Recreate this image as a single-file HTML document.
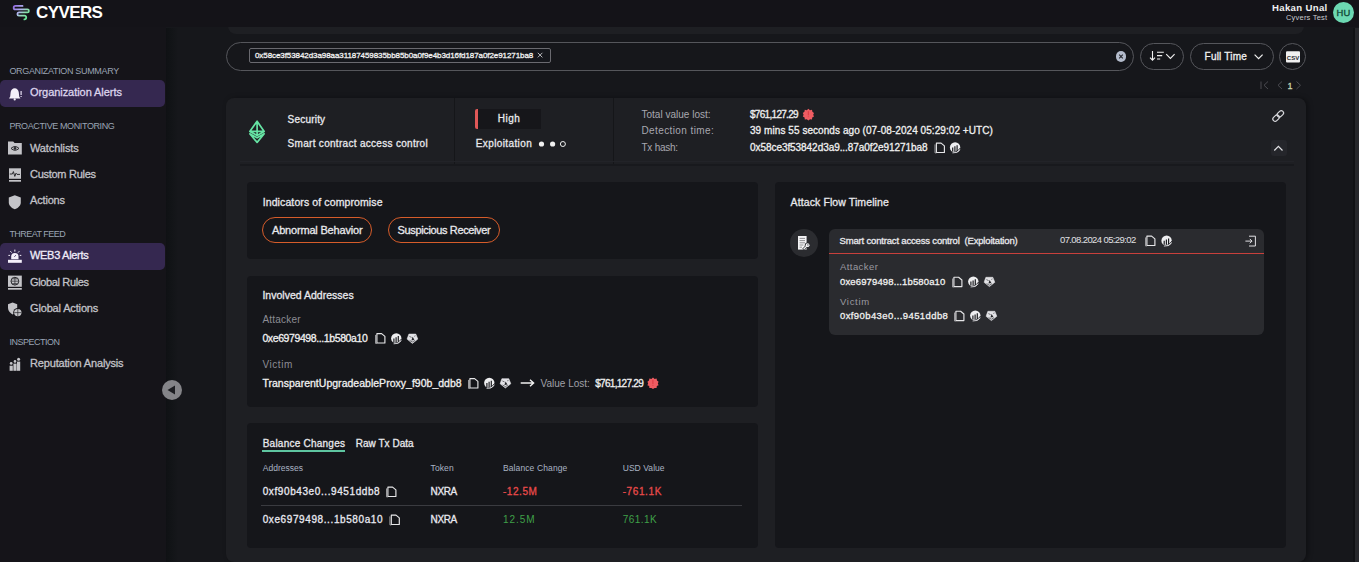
<!DOCTYPE html>
<html><head><meta charset="utf-8">
<style>
*{box-sizing:border-box;margin:0;padding:0}
html,body{width:1359px;height:562px;overflow:hidden;background:#16171b;font-family:"Liberation Sans",sans-serif}
.a{position:absolute}
.t{position:absolute;line-height:1;white-space:pre;font-family:"Liberation Sans",sans-serif}
svg{position:absolute;overflow:visible}
</style></head><body>
<!-- sidebar -->
<div class="a" style="left:0;top:0;width:166px;height:562px;background:#151419"></div>
<div class="a" style="left:166px;top:28px;width:12px;height:534px;background:linear-gradient(90deg,#0f1114 0%,#121417 45%,#16171b 100%)"></div>
<!-- top peek card -->
<div class="a" style="left:228px;top:0;width:1076px;height:33.5px;background:#1e1f23;border-radius:0 0 8px 8px"></div>
<!-- header -->
<div class="a" style="left:0;top:0;width:1359px;height:27px;background:#141318"></div>
<!-- scrollbar -->
<div class="a" style="left:1352.5px;top:28px;width:2px;height:534px;background:#111215"></div><div class="a" style="left:1354.5px;top:28px;width:4.5px;height:534px;background:#27282c"></div>
<!-- active nav -->
<div class="a" style="left:0;top:80px;width:165px;height:26.5px;background:#352850;border-radius:5px"></div>
<div class="a" style="left:0;top:243px;width:165px;height:27px;background:#352850;border-radius:5px"></div>
<!-- avatar -->
<div class="a" style="left:1333px;top:2px;width:21px;height:21px;border-radius:50%;background:#6cd8b2"></div>
<!-- search -->
<div class="a" style="left:226px;top:42px;width:908px;height:29px;border:1px solid #55565b;border-radius:15px"></div>
<div class="a" style="left:249px;top:48px;width:302px;height:15px;border:1px solid #6a6a70;border-radius:2px;background:#15171c"></div>
<div class="a" style="left:1115.8px;top:51.3px;width:10.4px;height:10.4px;border-radius:50%;background:#b4bccc"></div>
<div class="a" style="left:1140px;top:43px;width:44px;height:27px;border:1px solid #55565b;border-radius:14px"></div>
<div class="a" style="left:1190px;top:43px;width:84px;height:27px;border:1px solid #55565b;border-radius:14px"></div>
<div class="a" style="left:1279px;top:43px;width:27px;height:27px;border:1px solid #55565b;border-radius:50%"></div>
<!-- main card -->
<div class="a" style="left:225.5px;top:98px;width:1080.5px;height:464px;background:#1e1f23;border-radius:8px;box-shadow:2px 0 5px rgba(0,0,0,0.35)"></div>
<div class="a" style="left:454px;top:98px;width:1px;height:66px;background:#151619"></div>
<div class="a" style="left:613px;top:98px;width:1px;height:66px;background:#151619"></div>
<div class="a" style="left:240px;top:161px;width:1054px;height:1px;background:#222328"></div><div class="a" style="left:240px;top:164px;width:1054px;height:1.5px;background:#18191d"></div>
<!-- high badge -->
<div class="a" style="left:478px;top:109px;width:63px;height:20px;background:#16161a"></div>
<div class="a" style="left:474.5px;top:109px;width:3.5px;height:20px;background:#e05858;border-radius:2px 0 0 2px"></div>
<!-- chevron btn -->
<div class="a" style="left:1270.5px;top:140px;width:16px;height:16px;background:#25262b;border-radius:3px"></div>
<!-- inner panels -->
<div class="a" style="left:247px;top:182px;width:511px;height:76.5px;background:#15161a;border-radius:4px"></div>
<div class="a" style="left:247px;top:275.5px;width:511px;height:131px;background:#15161a;border-radius:4px"></div>
<div class="a" style="left:247px;top:423px;width:511px;height:125px;background:#15161a;border-radius:4px"></div>
<div class="a" style="left:774.5px;top:182px;width:511.5px;height:366px;background:#15161a;border-radius:4px"></div>
<!-- pills -->
<div class="a" style="left:262px;top:217px;width:110px;height:26px;border:1.5px solid #d65c2a;border-radius:13px"></div>
<div class="a" style="left:388px;top:217px;width:112px;height:26px;border:1.5px solid #d65c2a;border-radius:13px"></div>
<!-- tabs -->
<div class="a" style="left:262px;top:450.3px;width:83px;height:1.7px;background:#5ec5a0"></div>
<div class="a" style="left:261px;top:505px;width:481px;height:1px;background:#3a3b40"></div>
<!-- timeline -->
<div class="a" style="left:790px;top:229px;width:28px;height:28px;border-radius:50%;background:#2b2c30"></div>
<div class="a" style="left:829px;top:229px;width:434.5px;height:105.5px;background:#2a2b2f;border-radius:6px"></div>
<div class="a" style="left:829px;top:252.5px;width:434.5px;height:1.6px;background:#c8403c"></div>
<!-- collapse -->
<div class="a" style="left:162px;top:380px;width:20px;height:20px;border-radius:50%;background:#848488"></div>

<svg width="1359" height="562" viewBox="0 0 1359 562" style="left:0;top:0">
<defs>
<linearGradient id="lg" gradientUnits="userSpaceOnUse" x1="13" y1="5" x2="28" y2="18"><stop offset="0" stop-color="#9060e0"/><stop offset="0.45" stop-color="#b0b4f0"/><stop offset="0.7" stop-color="#90e0b0"/><stop offset="1" stop-color="#5ee890"/></linearGradient>
<g id="cp"><path d="M1.9 0.6H6.6L9.9 3.4V10H1.9Z" fill="none" stroke="#e6e6e8" stroke-width="1.15" stroke-linejoin="round"/><path d="M0.5 1.9V10.4H1.9" fill="none" stroke="#a8a8ac" stroke-width="0.9"/></g>
<g id="es"><circle cx="5.3" cy="5.2" r="5.2" fill="#eeeef0"/><path d="M2.9 9.2V5.2M5.1 9.2V4M7.3 8.6V2.9" stroke="#1c1d21" stroke-width="1.2"/><path d="M1.2 9.6Q6.4 11.4 10.6 5.6" stroke="#1c1d21" stroke-width="0.9" fill="none"/><path d="M2.6 10.6Q7.4 11.2 10.4 7.4" stroke="#d8d8dc" stroke-width="0.9" fill="none"/></g>
<g id="fx"><path d="M1.9 0.9H8.8L10.8 5.9L5.4 10.2L0.1 5.9Z" fill="#e2e2e6" stroke="#e2e2e6" stroke-width="0.6" stroke-linejoin="round"/><path d="M5.6 3.6L7.4 6.6L4.4 7.2Z" fill="#222327"/><path d="M2.4 3.2L4.6 4.2M8.2 2.2L7.6 3.4M2.6 7.2L5.4 8.8L8 7.2" stroke="#222327" stroke-width="0.6" fill="none"/></g>
</defs>
<!-- logo -->
<path d="M22.5 5.9H15.4C13.1 5.9 13.1 9.4 15.4 9.4H27.4C29.4 9.4 29.4 12.4 27.4 12.4H18.9C16.9 12.4 16.9 15.6 18.9 15.6H24.6C26.8 15.6 26.8 19.4 24.4 19.4" fill="none" stroke="url(#lg)" stroke-width="1.8" stroke-linecap="round" stroke-linejoin="round"/>
<!-- bell -->
<path d="M14.7 88.2C16.8 88.2 18.6 89.8 18.8 92.6L19.2 96.6L20.4 98.6H9.0L10.2 96.6L10.6 92.6C10.8 89.8 12.6 88.2 14.7 88.2Z" fill="#f4f0fa"/>
<circle cx="14.7" cy="99.4" r="1.1" fill="#f4f0fa"/>
<rect x="20.5" y="91" width="1.2" height="4" fill="#e8e0f4"/><rect x="20.5" y="96" width="1.2" height="1" fill="#e8e0f4"/>
<!-- watchlists folder -->
<path d="M8 141.4H13.2L14.6 143H21.8V154.4H8Z" fill="#c4c4c8"/>
<path d="M11 148.4Q15 144.6 19 148.4Q15 152.2 11 148.4Z" fill="none" stroke="#2a2a2e" stroke-width="1"/>
<circle cx="15" cy="148.4" r="1.3" fill="#2a2a2e"/>
<!-- custom rules -->
<rect x="9" y="168.3" width="12" height="10.5" fill="#c4c4c8"/>
<rect x="9" y="180" width="12" height="1.7" fill="#c4c4c8"/>
<path d="M9.8 174H12.4L13.4 171.6L14.8 176.4L16 173.2L17 174.4H20" fill="none" stroke="#2a2a2e" stroke-width="1"/>
<!-- actions shield -->
<path d="M14.8 195.2L20.8 197.4V202.4C20.8 205.6 18 207.8 14.8 209.3C11.6 207.8 8.8 205.6 8.8 202.4V197.4Z" fill="#c4c4c8"/>
<!-- web3 alarm -->
<path d="M11.2 259.2V256.6A3.65 3.65 0 0 1 18.5 256.6V259.2Z" fill="#f4f0fa"/>
<path d="M14.4 256.8L15.8 255.2" stroke="#352850" stroke-width="0.9"/>
<rect x="8" y="259.8" width="13.8" height="3" fill="#f4f0fa"/>
<path d="M14.85 249.6V251.6M10.4 251.2L11.6 252.6M19.3 251.2L18.1 252.6M8.4 255.4H10M19.7 255.4H21.3" stroke="#f4f0fa" stroke-width="1"/>
<!-- global rules -->
<rect x="8" y="275.6" width="13.8" height="11.2" fill="#c4c4c8"/>
<rect x="8" y="288" width="13.8" height="1.7" fill="#c4c4c8"/>
<circle cx="14.9" cy="281.2" r="3.9" fill="none" stroke="#2a2a2e" stroke-width="1"/>
<path d="M11 281.2H18.8M14.9 277.3V285.1M12.2 278.8H17.6M12.2 283.6H17.6" stroke="#2a2a2e" stroke-width="0.7"/>
<!-- global actions -->
<path d="M12.6 302.6L17.2 304.3V308C17.2 311 15 313 12.6 314.4C10.2 313 8 311 8 308V304.3Z" fill="#c4c4c8"/>
<circle cx="17.8" cy="312.6" r="4.6" fill="#151419"/>
<circle cx="17.8" cy="312.6" r="3.7" fill="#c4c4c8"/>
<path d="M14.2 312.6H21.4M17.8 309V316.2" stroke="#2a2a2e" stroke-width="0.7"/>
<!-- reputation -->
<rect x="9.6" y="365.7" width="3.2" height="5.1" fill="#c4c4c8"/>
<rect x="13.4" y="363.6" width="3.2" height="7.2" fill="#c4c4c8"/>
<rect x="17" y="361.6" width="3.2" height="9.2" fill="#c4c4c8"/>
<circle cx="11.2" cy="363.4" r="1.4" fill="#c4c4c8"/><circle cx="15" cy="361.4" r="1.3" fill="#c4c4c8"/><circle cx="18.6" cy="359.2" r="1.5" fill="#c4c4c8"/>
<!-- collapse triangle -->
<path d="M167.5 390L175 385.5V394.5Z" fill="#1c1d21"/>
<!-- avatar text -->
<text x="1343.6" y="15.7" font-family="Liberation Sans" font-size="9.4" letter-spacing="0.4" fill="#124a38" stroke="#124a38" stroke-width="0.35" text-anchor="middle">HU</text>
<!-- chip x -->
<path d="M537.8 52.8L542.4 57.4M542.4 52.8L537.8 57.4" stroke="#c8c8cc" stroke-width="0.9"/>
<!-- clear x -->
<path d="M1119.2 54.7L1122.8 58.3M1122.8 54.7L1119.2 58.3" stroke="#24262c" stroke-width="1.1"/>
<!-- sort icon -->
<path d="M1152.5 51V60M1150 57.6L1152.5 60.2L1155 57.6" fill="none" stroke="#f0f0f0" stroke-width="1.1"/>
<path d="M1157 52.2H1163.8M1157 55.6H1162.2M1157 59H1160.2" stroke="#f0f0f0" stroke-width="1.1"/>
<path d="M1166.2 54.2L1170.4 58.4L1174.6 54.2" fill="none" stroke="#f0f0f0" stroke-width="1.1"/>
<!-- full time chevron -->
<path d="M1254.6 54.6L1258.6 58.6L1262.6 54.6" fill="none" stroke="#f0f0f0" stroke-width="1.2"/>
<!-- csv -->
<rect x="1286" y="51.3" width="14" height="11.3" rx="1" fill="#f0f0f0"/>
<text x="1293" y="60" font-family="Liberation Sans" font-weight="700" font-size="6" fill="#2a2a2e" text-anchor="middle">CSV</text>
<!-- pagination -->
<path d="M1261 81.5V89M1268 81.5L1264 85.25L1268 89" fill="none" stroke="#4a4a50" stroke-width="1"/>
<path d="M1282 81.5L1278 85.25L1282 89" fill="none" stroke="#4a4a50" stroke-width="1"/>
<path d="M1296.5 81.5L1300.5 85.25L1296.5 89" fill="none" stroke="#4a4a50" stroke-width="1"/>
<!-- eth -->
<path d="M257.1 121.2L249.8 131.4L257.1 135.4L264.2 131.4Z M257.1 121.2V135.4 M249.8 131.4H264.2" fill="none" stroke="#66e4a4" stroke-width="1.7" stroke-linejoin="round"/>
<path d="M249.8 133.8L257.1 142.4L264.2 133.8L257.1 137.8Z" fill="none" stroke="#66e4a4" stroke-width="1.7" stroke-linejoin="round"/>
<!-- dots -->
<circle cx="541.5" cy="144" r="2.6" fill="#f0f0f0"/><circle cx="552.6" cy="144" r="2.6" fill="#f0f0f0"/><circle cx="562.9" cy="144" r="2.5" fill="none" stroke="#f0f0f0" stroke-width="1"/>
<!-- red badges -->
<g id="rb"><path d="M808.4 108.8L810 110.2L812 109.8L812.4 111.8L814 113L813.2 114.8L814 116.6L812.2 117.4L812 119.4L810 119.2L808.4 120.4L806.8 119.2L804.8 119.4L804.6 117.4L802.8 116.6L803.6 114.8L802.8 113L804.4 111.8L804.8 109.8L806.8 110.2Z" fill="#ef5c62"/><path d="M808.3 111.2V115.4M808.3 116.4V117.2" stroke="#d83440" stroke-width="0.9"/></g>
<use href="#rb" transform="translate(-155.4 268.7)"/>
<!-- link -->
<g transform="translate(1278.2 116) rotate(-45)" fill="none" stroke="#d8d8dc" stroke-width="1.2"><rect x="-6.6" y="-2.3" width="7.2" height="4.6" rx="2.3"/><rect x="-0.6" y="-2.3" width="7.2" height="4.6" rx="2.3"/></g>
<!-- chevron up -->
<path d="M1274.3 150.5L1278.4 146.3L1282.5 150.5" fill="none" stroke="#e0e0e4" stroke-width="1.2"/>
<!-- header icons -->
<use href="#cp" x="934.5" y="142.5"/>
<use href="#es" x="949.8" y="142.3"/>
<!-- involved -->
<use href="#cp" x="375" y="333"/><use href="#es" x="391" y="333.2"/><use href="#fx" x="407" y="333.2"/>
<use href="#cp" x="468" y="378"/><use href="#es" x="484" y="377.8"/><use href="#fx" x="500" y="377.8"/>
<path d="M520.7 383H533.4M530 379.8L533.6 383L530 386.2" fill="none" stroke="#f0f0f0" stroke-width="1.4"/>
<!-- table copies -->
<use href="#cp" x="386" y="486.5"/><use href="#cp" x="389.4" y="514.5"/>
<!-- timeline -->
<path d="M798 236H806.6V249.6H798Z" fill="#f4f4f6"/>
<path d="M799.6 238.4H805M799.6 240.6H805M799.6 242.8H805M799.6 245H803.4M799.6 247.2H802" stroke="#3a3b40" stroke-width="0.55"/>
<path d="M807.6 245.2L803.2 249.6" stroke="#2b2c30" stroke-width="2.6"/>
<circle cx="807.6" cy="245.2" r="2.8" fill="#2b2c30"/>
<path d="M807.4 245.4L803.6 249.2" stroke="#f4f4f6" stroke-width="1.3"/>
<circle cx="807.6" cy="245.2" r="1.9" fill="#f4f4f6"/><circle cx="807.9" cy="244.9" r="0.6" fill="#2b2c30"/>
<use href="#cp" x="1145" y="235.5"/><use href="#es" x="1161.3" y="235.5"/>
<path d="M1249 236.2H1255.4V246H1249M1245.4 241.1H1252M1249.8 238.9L1252 241.1L1249.8 243.3" fill="none" stroke="#e0e0e4" stroke-width="1"/>
<use href="#cp" x="952" y="276.6"/><use href="#es" x="968" y="276.4"/><use href="#fx" x="984" y="276.4"/>
<use href="#cp" x="954" y="310.6"/><use href="#es" x="970" y="310.4"/><use href="#fx" x="986" y="310.4"/>
</svg>

<div class="t" style="left:36.0px;top:4.00px;font-size:17px;font-weight:700;color:#ffffff;letter-spacing:-0.600px">CYVERS</div>
<div class="t" style="left:1272.0px;top:3.00px;font-size:9.6px;font-weight:700;color:#f0f0f0;letter-spacing:0.333px">Hakan Unal</div>
<div class="t" style="left:1286.0px;top:14.00px;font-size:7.5px;font-weight:400;color:#c8c8cc;letter-spacing:0.200px">Cyvers Test</div>
<div class="t" style="left:9.4px;top:67.00px;font-size:9px;font-weight:400;color:#9aa4b4;letter-spacing:-0.337px">ORGANIZATION SUMMARY</div>
<div class="t" style="left:30.0px;top:87.00px;font-size:11px;font-weight:400;color:#dcd4ec;letter-spacing:-0.056px;-webkit-text-stroke:0.3px #dcd4ec">Organization Alerts</div>
<div class="t" style="left:9.4px;top:122.00px;font-size:9px;font-weight:400;color:#9aa4b4;letter-spacing:-0.389px">PROACTIVE MONITORING</div>
<div class="t" style="left:30.0px;top:143.00px;font-size:11px;font-weight:400;color:#c2c2c8;letter-spacing:-0.111px;-webkit-text-stroke:0.3px #c2c2c8">Watchlists</div>
<div class="t" style="left:30.0px;top:169.00px;font-size:11px;font-weight:400;color:#c2c2c8;letter-spacing:-0.273px;-webkit-text-stroke:0.3px #c2c2c8">Custom Rules</div>
<div class="t" style="left:30.0px;top:195.00px;font-size:11px;font-weight:400;color:#c2c2c8;letter-spacing:-0.167px;-webkit-text-stroke:0.3px #c2c2c8">Actions</div>
<div class="t" style="left:9.4px;top:230.00px;font-size:9px;font-weight:400;color:#9aa4b4;letter-spacing:-0.540px">THREAT FEED</div>
<div class="t" style="left:30.0px;top:250.00px;font-size:11px;font-weight:400;color:#f0ecf8;letter-spacing:-0.300px;-webkit-text-stroke:0.3px #f0ecf8">WEB3 Alerts</div>
<div class="t" style="left:30.0px;top:277.00px;font-size:11px;font-weight:400;color:#c2c2c8;letter-spacing:-0.364px;-webkit-text-stroke:0.3px #c2c2c8">Global Rules</div>
<div class="t" style="left:30.0px;top:303.00px;font-size:11px;font-weight:400;color:#c2c2c8;letter-spacing:-0.154px;-webkit-text-stroke:0.3px #c2c2c8">Global Actions</div>
<div class="t" style="left:9.4px;top:338.00px;font-size:9px;font-weight:400;color:#9aa4b4;letter-spacing:-0.489px">INSPECTION</div>
<div class="t" style="left:30.0px;top:358.00px;font-size:11px;font-weight:400;color:#c2c2c8;letter-spacing:-0.167px;-webkit-text-stroke:0.3px #c2c2c8">Reputation Analysis</div>
<div class="t" style="left:255.0px;top:52.00px;font-size:8px;font-weight:400;color:#f0f0f0;letter-spacing:-0.077px;-webkit-text-stroke:0.3px #f0f0f0">0x58ce3f53842d3a98aa31187459835bb85b0a0f9e4b3d16fd187a0f2e91271ba8</div>
<div class="t" style="left:1204.6px;top:52.00px;font-size:10px;font-weight:400;color:#f0f0f0;letter-spacing:0.213px;-webkit-text-stroke:0.3px #f0f0f0">Full Time</div>
<div class="t" style="left:1287.4px;top:82.00px;font-size:9px;font-weight:400;color:#c8d4b0;letter-spacing:-1.900px;-webkit-text-stroke:0.3px #c8d4b0">1</div>
<div class="t" style="left:287.6px;top:115.00px;font-size:10px;font-weight:400;color:#e8e8ec;letter-spacing:0.200px;-webkit-text-stroke:0.3px #e8e8ec">Security</div>
<div class="t" style="left:287.6px;top:139.00px;font-size:10px;font-weight:400;color:#e8e8ec;letter-spacing:0.300px;-webkit-text-stroke:0.3px #e8e8ec">Smart contract access control</div>
<div class="t" style="left:497.7px;top:114.00px;font-size:10px;font-weight:400;color:#e8e8ec;letter-spacing:0.500px;-webkit-text-stroke:0.3px #e8e8ec">High</div>
<div class="t" style="left:475.8px;top:139.00px;font-size:10px;font-weight:400;color:#e8e8ec;letter-spacing:0.382px;-webkit-text-stroke:0.3px #e8e8ec">Exploitation</div>
<div class="t" style="left:641.5px;top:110.00px;font-size:10px;font-weight:400;color:#a8a8b0;letter-spacing:0.006px">Total value lost:</div>
<div class="t" style="left:641.5px;top:126.00px;font-size:10px;font-weight:400;color:#a8a8b0;letter-spacing:0.393px">Detection time:</div>
<div class="t" style="left:641.5px;top:143.00px;font-size:10px;font-weight:400;color:#a8a8b0;letter-spacing:-0.243px">Tx hash:</div>
<div class="t" style="left:750.0px;top:110.00px;font-size:10px;font-weight:400;color:#f0f0f0;letter-spacing:-0.700px;-webkit-text-stroke:0.3px #f0f0f0">$761,127.29</div>
<div class="t" style="left:750.0px;top:126.00px;font-size:10px;font-weight:400;color:#f0f0f0;letter-spacing:0.062px;-webkit-text-stroke:0.3px #f0f0f0">39 mins 55 seconds ago (07-08-2024 05:29:02 +UTC)</div>
<div class="t" style="left:750.0px;top:143.00px;font-size:10px;font-weight:400;color:#f0f0f0;letter-spacing:-0.059px;-webkit-text-stroke:0.3px #f0f0f0">0x58ce3f53842d3a9...87a0f2e91271ba8</div>
<div class="t" style="left:262.7px;top:197.00px;font-size:10.5px;font-weight:400;color:#e8e8ec;letter-spacing:0.109px;-webkit-text-stroke:0.3px #e8e8ec">Indicators of compromise</div>
<div class="t" style="left:272.0px;top:225.00px;font-size:11px;font-weight:400;color:#e8e8ec;letter-spacing:-0.188px;-webkit-text-stroke:0.3px #e8e8ec">Abnormal Behavior</div>
<div class="t" style="left:397.6px;top:225.00px;font-size:11px;font-weight:400;color:#e8e8ec;letter-spacing:-0.367px;-webkit-text-stroke:0.3px #e8e8ec">Suspicious Receiver</div>
<div class="t" style="left:262.4px;top:290.00px;font-size:10.5px;font-weight:400;color:#e8e8ec;letter-spacing:0.012px;-webkit-text-stroke:0.3px #e8e8ec">Involved Addresses</div>
<div class="t" style="left:262.4px;top:315.00px;font-size:10px;font-weight:400;color:#8c8c94;letter-spacing:0.200px">Attacker</div>
<div class="t" style="left:262.4px;top:333.00px;font-size:10.5px;font-weight:400;color:#f0f0f0;letter-spacing:-0.395px;-webkit-text-stroke:0.3px #f0f0f0">0xe6979498...1b580a10</div>
<div class="t" style="left:262.4px;top:360.00px;font-size:10px;font-weight:400;color:#8c8c94;letter-spacing:0.580px">Victim</div>
<div class="t" style="left:262.4px;top:378.00px;font-size:10.5px;font-weight:400;color:#f0f0f0;letter-spacing:0.017px;-webkit-text-stroke:0.3px #f0f0f0">TransparentUpgradeableProxy_f90b_ddb8</div>
<div class="t" style="left:540.6px;top:379.00px;font-size:10px;font-weight:400;color:#a0a0a8;letter-spacing:-0.010px">Value Lost:</div>
<div class="t" style="left:595.2px;top:379.00px;font-size:10px;font-weight:400;color:#f0f0f0;letter-spacing:-0.700px;-webkit-text-stroke:0.3px #f0f0f0">$761,127.29</div>
<div class="t" style="left:262.7px;top:439.00px;font-size:10px;font-weight:400;color:#e8e8ec;letter-spacing:0.236px;-webkit-text-stroke:0.3px #e8e8ec">Balance Changes</div>
<div class="t" style="left:355.7px;top:439.00px;font-size:10px;font-weight:400;color:#e8e8ec;letter-spacing:0.030px;-webkit-text-stroke:0.3px #e8e8ec">Raw Tx Data</div>
<div class="t" style="left:262.7px;top:464.00px;font-size:8.5px;font-weight:400;color:#aab4c4;letter-spacing:0.025px">Addresses</div>
<div class="t" style="left:430.5px;top:464.00px;font-size:8.5px;font-weight:400;color:#aab4c4;letter-spacing:0.125px">Token</div>
<div class="t" style="left:502.9px;top:464.00px;font-size:8.5px;font-weight:400;color:#aab4c4;letter-spacing:0.123px">Balance Change</div>
<div class="t" style="left:622.7px;top:464.00px;font-size:8.5px;font-weight:400;color:#aab4c4;letter-spacing:0.062px">USD Value</div>
<div class="t" style="left:262.7px;top:487.00px;font-size:10px;font-weight:400;color:#e8e8f0;letter-spacing:0.595px;-webkit-text-stroke:0.3px #e8e8f0">0xf90b43e0...9451ddb8</div>
<div class="t" style="left:430.5px;top:487.00px;font-size:10px;font-weight:400;color:#e8e8f0;letter-spacing:-0.333px;-webkit-text-stroke:0.3px #e8e8f0">NXRA</div>
<div class="t" style="left:503.0px;top:487.00px;font-size:10px;font-weight:400;color:#e84a4a;letter-spacing:0.540px;-webkit-text-stroke:0.3px #e84a4a">-12.5M</div>
<div class="t" style="left:622.7px;top:487.00px;font-size:10px;font-weight:400;color:#e84a4a;letter-spacing:0.600px;-webkit-text-stroke:0.3px #e84a4a">-761.1K</div>
<div class="t" style="left:262.7px;top:515.00px;font-size:10px;font-weight:400;color:#e8e8f0;letter-spacing:0.600px;-webkit-text-stroke:0.3px #e8e8f0">0xe6979498...1b580a10</div>
<div class="t" style="left:430.5px;top:515.00px;font-size:10px;font-weight:400;color:#e8e8f0;letter-spacing:-0.333px;-webkit-text-stroke:0.3px #e8e8f0">NXRA</div>
<div class="t" style="left:503.0px;top:515.00px;font-size:10px;font-weight:400;color:#3fa048;letter-spacing:0.925px">12.5M</div>
<div class="t" style="left:622.7px;top:515.00px;font-size:10px;font-weight:400;color:#3fa048;letter-spacing:0.440px">761.1K</div>
<div class="t" style="left:790.6px;top:197.00px;font-size:10.5px;font-weight:400;color:#e8e8ec;letter-spacing:0.100px;-webkit-text-stroke:0.3px #e8e8ec">Attack Flow Timeline</div>
<div class="t" style="left:839.6px;top:236.00px;font-size:9.5px;font-weight:400;color:#e8e8ec;letter-spacing:-0.177px;-webkit-text-stroke:0.3px #e8e8ec">Smart contract access control  (Exploitation)</div>
<div class="t" style="left:1060.0px;top:235.00px;font-size:9.5px;font-weight:400;color:#e0e0e4;letter-spacing:-0.611px">07.08.2024 05:29:02</div>
<div class="t" style="left:840.0px;top:262.00px;font-size:9.5px;font-weight:400;color:#9a9aa0;letter-spacing:0.429px">Attacker</div>
<div class="t" style="left:840.0px;top:277.00px;font-size:9.5px;font-weight:400;color:#f0f0f0;letter-spacing:0.140px;-webkit-text-stroke:0.3px #f0f0f0">0xe6979498...1b580a10</div>
<div class="t" style="left:840.0px;top:297.00px;font-size:9.5px;font-weight:400;color:#9a9aa0;letter-spacing:0.680px">Victim</div>
<div class="t" style="left:840.0px;top:311.00px;font-size:9.5px;font-weight:400;color:#f0f0f0;letter-spacing:0.400px;-webkit-text-stroke:0.3px #f0f0f0">0xf90b43e0...9451ddb8</div>
</body></html>
